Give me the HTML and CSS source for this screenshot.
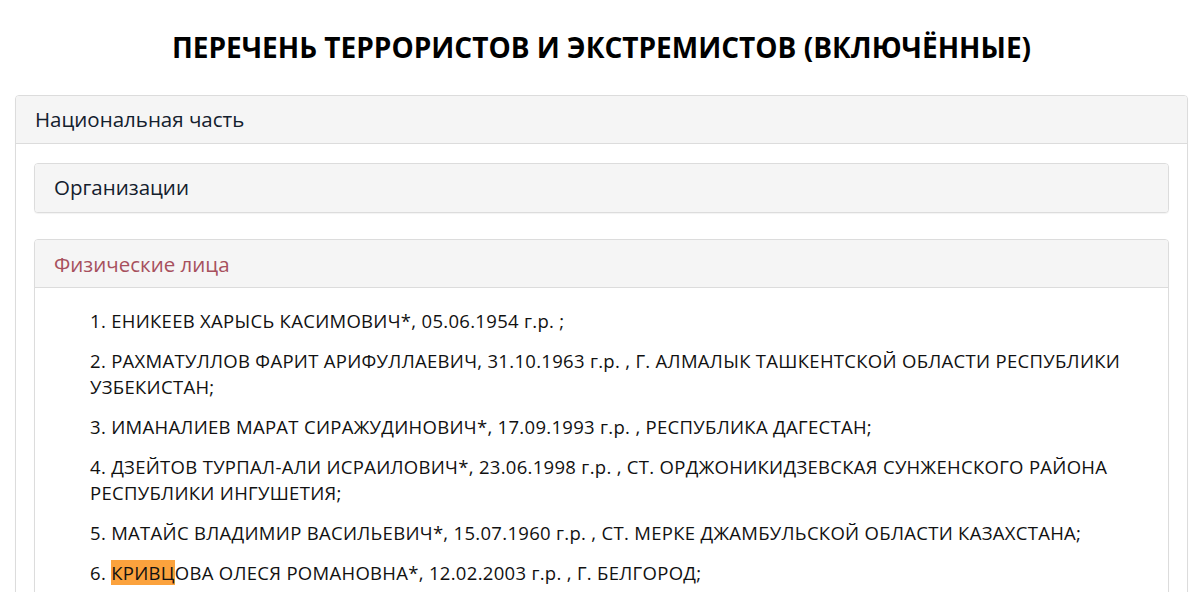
FILE: index.html
```html
<!DOCTYPE html>
<html lang="ru">
<head>
  <meta charset="UTF-8">
  <meta name="viewport" content="width=device-width, initial-scale=1.0">
  <title>Перечень террористов и экстремистов</title>
  <link rel="stylesheet" href="styles.css">
</head>
<body>
  <h1>ПЕРЕЧЕНЬ ТЕРРОРИСТОВ И ЭКСТРЕМИСТОВ (ВКЛЮЧЁННЫЕ)</h1>

  <div class="panel outer">
    <div class="panel-heading">Национальная часть</div>
    <div class="panel-body">
      <div class="panel inner">
        <div class="panel-heading">Организации</div>
      </div>

      <div class="panel inner active">
        <div class="panel-heading">Физические лица</div>
        <div class="panel-body list">
          <p>1. ЕНИКЕЕВ ХАРЫСЬ КАСИМОВИЧ*, 05.06.1954 г.р. ;</p>
          <p>2. РАХМАТУЛЛОВ ФАРИТ АРИФУЛЛАЕВИЧ, 31.10.1963 г.р. , Г. АЛМАЛЫК ТАШКЕНТСКОЙ ОБЛАСТИ РЕСПУБЛИКИ УЗБЕКИСТАН;</p>
          <p>3. ИМАНАЛИЕВ МАРАТ СИРАЖУДИНОВИЧ*, 17.09.1993 г.р. , РЕСПУБЛИКА ДАГЕСТАН;</p>
          <p>4. ДЗЕЙТОВ ТУРПАЛ-АЛИ ИСРАИЛОВИЧ*, 23.06.1998 г.р. , СТ. ОРДЖОНИКИДЗЕВСКАЯ СУНЖЕНСКОГО РАЙОНА РЕСПУБЛИКИ ИНГУШЕТИЯ;</p>
          <p>5. МАТАЙС ВЛАДИМИР ВАСИЛЬЕВИЧ*, 15.07.1960 г.р. , СТ. МЕРКЕ ДЖАМБУЛЬСКОЙ ОБЛАСТИ КАЗАХСТАНА;</p>
          <p>6. <mark>КРИВЦ</mark>ОВА ОЛЕСЯ РОМАНОВНА*, 12.02.2003 г.р. , Г. БЕЛГОРОД;</p>
        </div>
      </div>
    </div>
  </div>
</body>
</html>
```

FILE: styles.css
```css
* { box-sizing: border-box; }
body {
  margin: 0;
  padding: 0 12px 0 15px;
  background: #fff;
  color: #111;
  font-family: 'Open Sans', 'DejaVu Sans', sans-serif;
}
h1 {
  margin: 0;
  padding: 28px 0 0;
  height: 95px;
  text-align: center;
  font-size: 28px;
  line-height: 38px;
  font-weight: 700;
  color: #000;
}
.panel {
  border: 1px solid #dcdcdc;
  border-radius: 4px;
  background: #fff;
  box-shadow: 0 1px 1px rgba(0,0,0,0.05);
}
.panel-heading {
  background: #f5f5f5;
  border-bottom: 1px solid #dcdcdc;
  border-radius: 3px 3px 0 0;
  height: 48px;
  padding: 0 19px;
  font-size: 20.5px;
  line-height: 47px;
  color: #13202d;
}
.outer > .panel-body {
  padding: 19px 18px 0 18px;
}
.inner {
  margin-bottom: 26px;
}
.inner:first-child .panel-heading {
  border-bottom: none;
  border-radius: 3px;
}
.active .panel-heading {
  color: #a7505d;
  line-height: 49px;
}
.list {
  padding: 20px 36px 0 55px;
}
.list p {
  margin: 0 0 14px;
  font-size: 18.5px;
  line-height: 26px;
  letter-spacing: 0.3px;
  color: #111;
}
mark {
  background: #fba23d;
  color: #111;
}
```
